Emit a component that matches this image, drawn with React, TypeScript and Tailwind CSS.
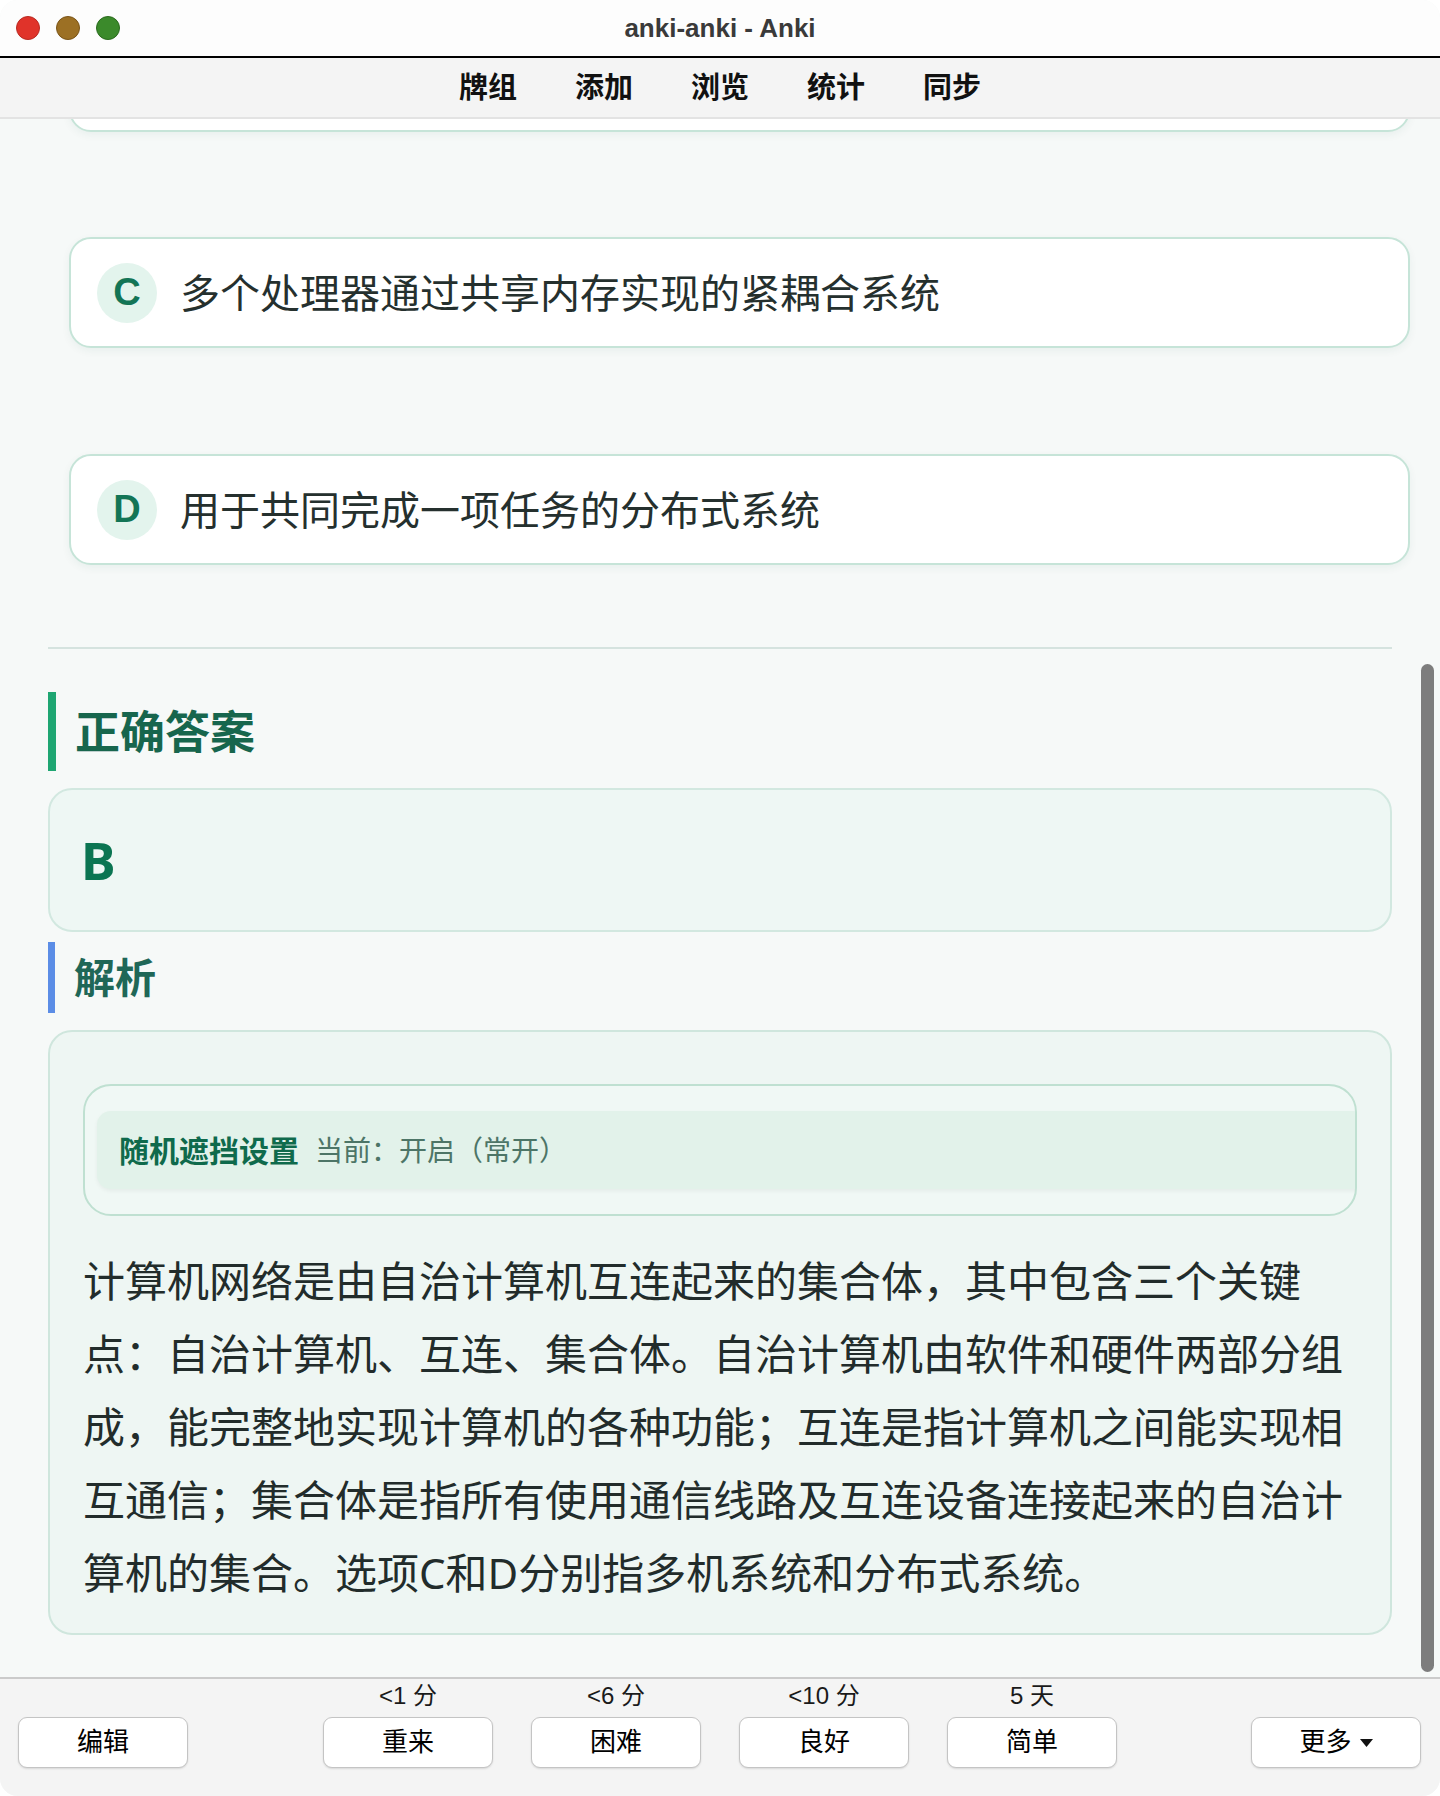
import React from 'react';

const cjk = { fontFamily: '"Noto Sans", "Noto Sans CJK SC", sans-serif' };
const ui = { fontFamily: '"Liberation Sans", "Noto Sans CJK SC", sans-serif' };

function OptionCard({ letter, text, className = '' }: { letter: string; text: string; className?: string }) {
  return (
    <div
      className={`ml-[21px] mr-[-18px] h-[111px] shrink-0 rounded-[22px] border-2 border-[#c6e4d8] bg-white shadow-[0_3px_8px_rgba(20,80,60,0.06)] flex items-center pl-[26px] ${className}`}
    >
      <div
        className="w-[60px] h-[60px] rounded-full bg-[#e3f4ed] flex items-center justify-center text-[38px] font-bold text-[#137556]"
        style={ui}
      >
        {letter}
      </div>
      <div className="ml-[23px] text-[40px] text-[#25302e]">{text}</div>
    </div>
  );
}

function Grade({ time, label }: { time: string; label: string }) {
  return (
    <div className="flex flex-col items-center gap-[8px]">
      <div className="text-[24px] leading-[26px] text-[#1a1a1a]">{time}</div>
      <Btn>{label}</Btn>
    </div>
  );
}

function Btn({ children }: { children: React.ReactNode }) {
  return (
    <button className="w-[170px] h-[51px] rounded-[9px] border border-[#c4c4c4] bg-white shadow-[0_1px_2px_rgba(0,0,0,0.12)] text-[26px] text-black flex items-center justify-center">
      {children}
    </button>
  );
}

export default function App() {
  return (
    <div className="w-[1440px] h-[1796px] bg-white" style={ui}>
      <div className="h-full flex flex-col rounded-[18px] overflow-hidden bg-[#f6f9f8]">
        {/* Title bar */}
        <div className="h-[56px] shrink-0 bg-[#fdfdfd] grid grid-cols-[1fr_auto_1fr] items-center">
          <div className="flex gap-[16px] pl-[16px]">
            <span className="w-[24px] h-[24px] rounded-full bg-[#e0332a] border border-[#b82a22]" />
            <span className="w-[24px] h-[24px] rounded-full bg-[#9c7024] border border-[#7a5418]" />
            <span className="w-[24px] h-[24px] rounded-full bg-[#3b8a2b] border border-[#2a6a1e]" />
          </div>
          <div className="text-[26px] font-semibold text-[#3a3a3a]">anki-anki - Anki</div>
          <div />
        </div>
        <div className="h-[2px] shrink-0 bg-black" />

        {/* Toolbar */}
        <div className="h-[61px] shrink-0 bg-[#f4f4f4] border-b-2 border-[#e3e3e3] flex items-center justify-center gap-[58px] pb-[2px] text-[29px] font-bold text-[#111]" style={cjk}>
          <span>牌组</span>
          <span>添加</span>
          <span>浏览</span>
          <span>统计</span>
          <span>同步</span>
        </div>

        {/* Card content */}
        <div className="flex-1 overflow-hidden relative" style={cjk}>
          <div className="px-[48px] flex flex-col">
            <div className="ml-[21px] mr-[-18px] mt-[-98px] h-[111px] shrink-0 rounded-[22px] border-2 border-[#c6e4d8] bg-white shadow-[0_3px_8px_rgba(20,80,60,0.06)]" />
            <OptionCard letter="C" text="多个处理器通过共享内存实现的紧耦合系统" className="mt-[105px]" />
            <OptionCard letter="D" text="用于共同完成一项任务的分布式系统" className="mt-[106px]" />

            <div className="mt-[82px] h-[2px] bg-[#d5e3df]" />

            <div className="mt-[43px] h-[79px] border-l-[8px] border-[#1ea672] pl-[19px] flex items-center text-[45px] font-bold text-[#17664d]">
              正确答案
            </div>
            <div className="mt-[17px] h-[144px] rounded-[24px] border-2 border-[#d2e8e0] bg-[#eef7f4] pl-[31px] flex items-center text-[52px] font-bold text-[#0b7552]">
              B
            </div>

            <div className="mt-[10px] h-[71px] border-l-[7px] border-[#5b8de6] pl-[19px] flex items-center text-[41px] font-bold text-[#1f6757]">
              解析
            </div>
            <div className="mt-[17px] rounded-[24px] border-2 border-[#cfe6dd] bg-[#eef6f3] px-[33px] pt-[52px] pb-[24px]">
              <div className="h-[132px] rounded-[28px] border-2 border-[#bfe0d1] bg-[#f0f8f5] overflow-hidden pl-[12px] flex items-center">
                <div className="h-[78px] w-[1300px] shrink-0 rounded-l-[14px] bg-[#e2f2ea] shadow-[0_2px_4px_rgba(0,0,0,0.05)] pl-[22px] flex items-center">
                  <span className="text-[30px] font-bold text-[#0f6a4c]">随机遮挡设置</span>
                  <span className="ml-[16px] text-[28px] text-[#4d7567]">当前：开启（常开）</span>
                </div>
              </div>
              <p className="mt-[28px] text-[42px] leading-[73px] text-[#222c2b]">
                计算机网络是由自治计算机互连起来的集合体，其中包含三个关键点：自治计算机、互连、集合体。自治计算机由软件和硬件两部分组成，能完整地实现计算机的各种功能；互连是指计算机之间能实现相互通信；集合体是指所有使用通信线路及互连设备连接起来的自治计算机的集合。选项C和D分别指多机系统和分布式系统。
              </p>
            </div>
          </div>

          {/* overlay scrollbar */}
          <div className="absolute right-[6px] top-[545px] w-[13px] h-[1008px] rounded-full bg-[#7d7d7d]" />
        </div>

        {/* Bottom answer bar */}
        <div className="h-[119px] shrink-0 border-t-2 border-[#cbcbcb] bg-[#f4f4f4] grid grid-cols-[1fr_auto_1fr] items-end pb-[28px]" style={ui}>
          <div className="pl-[18px]">
            <Btn>编辑</Btn>
          </div>
          <div className="flex gap-[38px]">
            <Grade time="<1 分" label="重来" />
            <Grade time="<6 分" label="困难" />
            <Grade time="<10 分" label="良好" />
            <Grade time="5 天" label="简单" />
          </div>
          <div className="flex justify-end pr-[19px]">
            <Btn>
              更多
              <svg width="13" height="8" viewBox="0 0 13 8" className="ml-[8px]">
                <path d="M0 0 L13 0 L6.5 8 Z" fill="#111" />
              </svg>
            </Btn>
          </div>
        </div>
      </div>
    </div>
  );
}
